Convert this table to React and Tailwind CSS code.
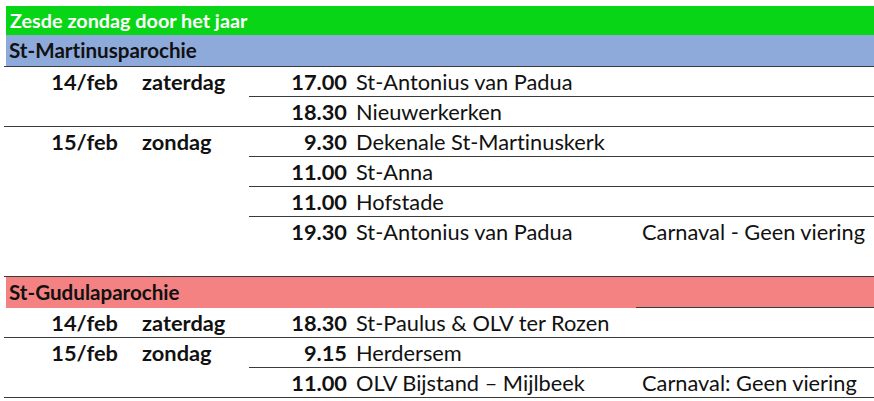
import React from 'react'

const LINE = 'border-[#3b3b3b]'

// line: 'full' | 'right' (from time column) | 'none'
const Row = ({ date, day, time, place, note, line = 'none' }) => {
  const left = line === 'full' ? `border-b ${LINE}` : 'border-b border-transparent'
  const right = line === 'none' ? 'border-b border-transparent' : `border-b ${LINE}`
  return (
    <div className="grid grid-cols-[120px_125px_103px_284px_1fr] h-[30px] text-[21.8px]">
      <div className={`${left} flex items-center justify-end pr-[6px] font-bold`}>{date}</div>
      <div className={`${left} flex items-center pl-[18px] font-bold`}>{day}</div>
      <div className={`${right} flex items-center justify-end pr-[5px] font-bold`}>{time}</div>
      <div className={`${right} flex items-center pl-[4px] whitespace-nowrap`}>{place}</div>
      <div className={`${right} flex items-center pl-[6px] whitespace-nowrap`}>{note}</div>
    </div>
  )
}

export default function App() {
  return (
    <div className="w-[874px] h-[401px] bg-white pt-[6px] pl-[4px] text-[#111] leading-none [font-variant-ligatures:none]" style={{ fontFamily: 'Lato, "Liberation Sans", sans-serif' }}>
      <div className="ml-[2px] h-[29px] bg-[#08d516] flex items-center pl-[4px] font-bold text-white text-[19.8px]">
        Zesde zondag door het jaar
      </div>
      <div className={`h-[32px] border-b ${LINE}`}>
        <div className="ml-[2px] h-full bg-[#8eaadb] flex items-center pl-[3px] font-bold text-[20.6px]">St-Martinusparochie</div>
      </div>

      <Row date="14/feb" day="zaterdag" time="17.00" place="St-Antonius van Padua" line="right" />
      <Row time="18.30" place="Nieuwerkerken" line="full" />
      <Row date="15/feb" day="zondag" time="9.30" place="Dekenale St-Martinuskerk" line="right" />
      <Row time="11.00" place="St-Anna" line="right" />
      <Row time="11.00" place="Hofstade" line="right" />
      <Row time="19.30" place="St-Antonius van Padua" note="Carnaval - Geen viering" />
      <Row line="full" />

      <div className="grid grid-cols-[632px_1fr] h-[31px]">
        <div className="ml-[2px] bg-[#f58282] flex items-center pl-[3px] font-bold text-[20.6px]">St-Gudulaparochie</div>
        <div className={`bg-[#f58282] border-b ${LINE}`}></div>
      </div>

      <Row date="14/feb" day="zaterdag" time="18.30" place="St-Paulus &amp; OLV ter Rozen" line="full" />
      <Row date="15/feb" day="zondag" time="9.15" place="Herdersem" line="right" />
      <Row time="11.00" place="OLV Bijstand – Mijlbeek" note="Carnaval: Geen viering" line="full" />
    </div>
  )
}
